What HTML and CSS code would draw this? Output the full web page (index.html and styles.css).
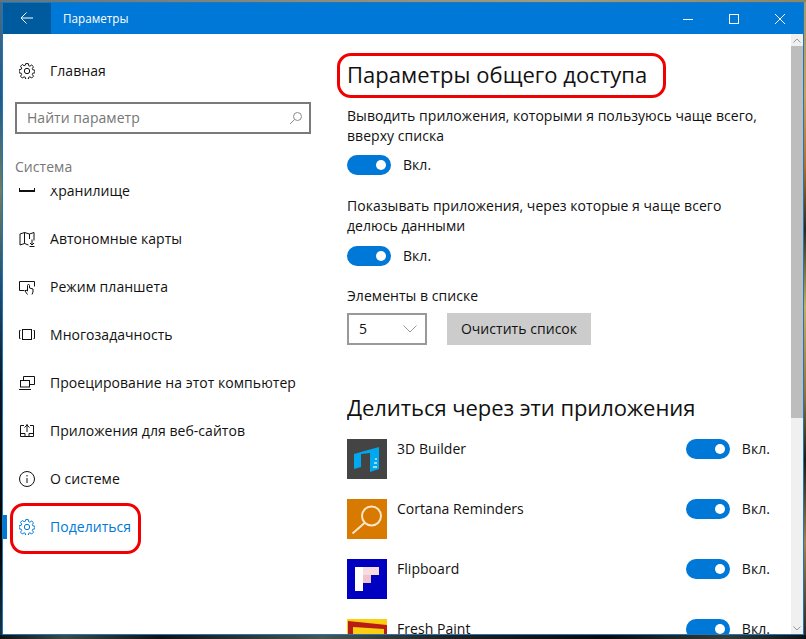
FILE: index.html
```html
<!DOCTYPE html>
<html lang="ru">
<head>
<meta charset="utf-8">
<title>Параметры</title>
<link rel="stylesheet" href="styles.css">
</head>
<body>
<div class="desktop">
  <div class="window">
    <header class="titlebar">
      <div class="back">
        <svg width="14" height="14" viewBox="0 0 14 14"><path d="M1 7h12M6.500 1.500L1 7l5.500 5.500" class="line-white"/></svg>
      </div>
      <div class="app-title">Параметры</div>
      <div class="caption">
        <svg width="12" height="12" viewBox="0 0 12 12"><path d="M1 6.500h10" class="line-white"/></svg>
      </div>
      <div class="caption">
        <svg width="12" height="12" viewBox="0 0 12 12"><rect x="1.500" y="1.500" width="9" height="9" class="line-white"/></svg>
      </div>
      <div class="caption">
        <svg width="12" height="12" viewBox="0 0 12 12"><path d="M1 1l10 10M11 1L1 11" class="line-white"/></svg>
      </div>
    </header>
    <div class="body">
      <aside class="sidebar">
        <div class="nav-item home">
          <svg class="ico" viewBox="0 0 16 16"><use href="#gear"/></svg>
          <span>Главная</span>
        </div>
        <div class="search">
          <span class="placeholder">Найти параметр</span>
          <svg width="14" height="14" viewBox="0 0 14 14"><circle cx="8.500" cy="5.500" r="4" class="line-grey"/><path d="M5.500 8.500L1 13" class="line-grey"/></svg>
        </div>
        <div class="section">Система</div>
        <div class="nav-list">
          <div class="nav-item first">
            <svg class="ico" viewBox="0 0 16 16"><path d="M0 8h16" class="line thick"/><rect x="0.500" y="0.500" width="15" height="7.500" class="line"/></svg>
            <span>Хранилище</span>
          </div>
          <div class="nav-item">
            <svg class="ico" viewBox="0 0 16 16"><path d="M5.500 1.500L1 3v11l4.500-1.500 4 1.500M5.500 1.500l5 1.500 4.500-1.500v8M5.500 1.500v11M10.500 3v5M13 8.500v5.500M11 12l2 2 2-2M10.500 15.500h5" class="line"/></svg>
            <span>Автономные карты</span>
          </div>
          <div class="nav-item">
            <svg class="ico" viewBox="0 0 16 16"><path d="M5.500 11.500H0.500v-9h15v5M8.500 15.500l-2.500-3.500 1-1 1.500 1V6.500a1 1 0 0 1 2 0V9l3.500 1v3l-1 2.500" class="line"/></svg>
            <span>Режим планшета</span>
          </div>
          <div class="nav-item">
            <svg class="ico" viewBox="0 0 16 16"><rect x="3.500" y="2.500" width="9" height="10" class="line"/><path d="M1.500 3.500H0.500v8h1M14.500 3.500h1v8h-1" class="line"/></svg>
            <span>Многозадачность</span>
          </div>
          <div class="nav-item">
            <svg class="ico" viewBox="0 0 16 16"><path d="M4.500 5.500v-4h11v8H10" class="line"/><rect x="1.500" y="5.500" width="9" height="6.500" class="line"/><path d="M0 14.500h12" class="line"/></svg>
            <span>Проецирование на этот компьютер</span>
          </div>
          <div class="nav-item">
            <svg class="ico" viewBox="0 0 16 16"><path d="M5 2.500H1.500v11h13v-11H11M8 1v8M5.500 4.500L8 2l2.500 2.500M1.500 10.500H6v3M10 13.500v-3h4.500" class="line"/></svg>
            <span>Приложения для веб-сайтов</span>
          </div>
          <div class="nav-item">
            <svg class="ico" viewBox="0 0 16 16"><circle cx="8" cy="8" r="7.500" class="line"/><path d="M8 7v5M8 4v1.500" class="line"/></svg>
            <span>О системе</span>
          </div>
          <div class="nav-item active">
            <svg class="ico" viewBox="0 0 16 16"><use href="#gear"/></svg>
            <span>Поделиться</span>
          </div>
        </div>
      </aside>
      <main class="content">
        <h1 class="h1">Параметры общего доступа</h1>
        <p class="para first-para">Выводить приложения, которыми я пользуюсь чаще всего, вверху списка</p>
        <div class="toggle-row mt9"><span class="toggle"></span><span>Вкл.</span></div>
        <p class="para second-para">Показывать приложения, через которые я чаще всего делюсь данными</p>
        <div class="toggle-row mt10"><span class="toggle"></span><span>Вкл.</span></div>
        <div class="label">Элементы в списке</div>
        <div class="controls">
          <div class="select"><span>5</span>
            <svg width="14" height="8" viewBox="0 0 14 8"><path d="M0.500 0.500L7 7l6.500-6.500" class="line-mid"/></svg>
          </div>
          <div class="button">Очистить список</div>
        </div>
        <h2 class="h2">Делиться через эти приложения</h2>
        <div class="apps">
          <div class="app">
            <svg class="app-icon" viewBox="0 0 40 40"><rect width="40" height="40" fill="#444444"/><path d="M7 15l7-2v15l-7 2z" fill="#00a8f0"/><path d="M14 13L32 8v22l-9 3V14l-9 1z" fill="#00a8f0"/><path d="M28 19h2v2h-2zM27 23h3v2h-3zM26 27h4v2h-4z" fill="#9adcf8"/></svg>
            <span class="app-name">3D Builder</span>
            <div class="toggle-row"><span class="toggle"></span><span>Вкл.</span></div>
          </div>
          <div class="app">
            <svg class="app-icon" viewBox="0 0 40 40"><rect width="40" height="40" fill="#d87900"/><circle cx="24.500" cy="17" r="9.500" fill="none" stroke="#fde6c8" stroke-width="2"/><path d="M17.500 24L5.500 34.500" stroke="#fde6c8" stroke-width="2" fill="none"/></svg>
            <span class="app-name">Cortana Reminders</span>
            <div class="toggle-row"><span class="toggle"></span><span>Вкл.</span></div>
          </div>
          <div class="app">
            <svg class="app-icon" viewBox="0 0 40 40"><rect width="40" height="40" fill="#0000c0"/><path d="M8 8h8v24H8z" fill="#ffffff"/><path d="M16 8h16v8H16z" fill="#f7dde0"/><path d="M16 16h8v8h-8z" fill="#f0c4cc"/></svg>
            <span class="app-name">Flipboard</span>
            <div class="toggle-row"><span class="toggle"></span><span>Вкл.</span></div>
          </div>
          <div class="app">
            <svg class="app-icon" viewBox="0 0 40 40"><rect width="40" height="40" fill="#fccf10"/><path d="M1 2l39 4v34h-3V10L6 8v32H1z" fill="#b81c14"/></svg>
            <span class="app-name">Fresh Paint</span>
            <div class="toggle-row"><span class="toggle"></span><span>Вкл.</span></div>
          </div>
        </div>
      </main>
      <div class="scrollbar">
        <div class="arrow">
          <svg width="8" height="5" viewBox="0 0 8 5"><path d="M0.500 4.500L4 1l3.500 3.500" class="line-mid"/></svg>
        </div>
        <div class="thumb"></div>
        <div class="track"></div>
        <div class="arrow">
          <svg width="8" height="5" viewBox="0 0 8 5"><path d="M0.500 0.500L4 4l3.500-3.500" class="line-mid"/></svg>
        </div>
      </div>
    </div>
    <div class="mark mark-title"></div>
    <div class="mark mark-nav"></div>
  </div>
</div>
<svg class="defs" width="0" height="0">
  <defs>
    <symbol id="gear" viewBox="0 0 16 16">
      <path d="M6.700 0.600h2.600l0.400 2.100 1.200 0.500 1.800-1.200 1.800 1.800-1.200 1.800 0.500 1.200 2.100 0.400v2.600l-2.100 0.400-0.500 1.200 1.200 1.800-1.800 1.800-1.800-1.200-1.200 0.500-0.400 2.100H6.700l-0.400-2.100-1.200-0.500-1.800 1.200-1.800-1.800 1.200-1.800-0.500-1.200-2.100-0.400V6.700l2.100-0.400 0.500-1.200-1.200-1.800 1.800-1.800 1.800 1.200 1.200-0.500z" fill="none" stroke="currentColor" stroke-width="1"/>
      <circle cx="8" cy="8" r="2.700" fill="none" stroke="currentColor" stroke-width="1"/>
    </symbol>
  </defs>
</svg>
</body>
</html>
```

FILE: styles.css
```css
* { box-sizing: border-box; }
html, body { margin: 0; padding: 0; }
body {
  width: 806px;
  height: 639px;
  overflow: hidden;
  font-family: "Open Sans", "Noto Sans", sans-serif;
  font-size: 14px;
  line-height: 20px;
  letter-spacing: 0.04px;
  color: #111111;
}
.desktop {
  width: 806px;
  height: 639px;
  padding: 2px 2px 4px 2px;
  background-color: #111;
  background-image:
    linear-gradient(90deg, #111 0, #3d4a44 8%, #111 20%, #4a5650 40%, #222 55%, #0a0a0a 75%, #333b38 90%, #111 100%),
    linear-gradient(90deg, #5e7686 0, #8c8c7c 40%, #a09a80 70%, #8a8468 100%),
    linear-gradient(180deg, #4d6c82 0, #1d5a8c 15%, #6e7e60 30%, #1b4f78 45%, #0a1a2a 60%, #020406 85%, #14384f 100%),
    linear-gradient(180deg, #a09a70 0, #c8a060 15%, #b06f30 26%, #2a2a20 36%, #c4b060 48%, #8c7040 62%, #1a1a14 72%, #a08050 85%, #222 100%);
  background-repeat: no-repeat;
  background-size: 806px 4px, 806px 2px, 2px 639px, 2px 639px;
  background-position: 0 635px, 0 0, 0 0, 804px 0;
}
.window {
  position: relative;
  width: 802px;
  height: 633px;
  border: 1px solid #1f76b8;
  background: #fff;
  display: flex;
  flex-direction: column;
}
.titlebar {
  height: 31px;
  flex: none;
  display: flex;
  align-items: center;
  background: #0078d7;
  color: #fff;
}
.back {
  width: 48px;
  height: 31px;
  padding-bottom: 2px;
  background: #005a9e;
  display: flex;
  align-items: center;
  justify-content: center;
}
.app-title {
  flex: 1;
  padding: 0 0 2px 12px;
  font-size: 11.7px;
  letter-spacing: 0;
}
.caption {
  width: 46px;
  height: 31px;
  display: flex;
  align-items: center;
  justify-content: center;
}
.line-white { fill: none; stroke: #fff; stroke-width: 1; }
.line { fill: none; stroke: #111; stroke-width: 1; }
.thick { stroke-width: 2; }
.line-grey { fill: none; stroke: #8a8a8a; stroke-width: 1; }
.line-mid { fill: none; stroke: #999; stroke-width: 1; }
.body { flex: 1; min-height: 0; display: flex; }
.sidebar {
  width: 344px;
  flex: none;
  display: flex;
  flex-direction: column;
  min-height: 0;
}
.nav-item {
  height: 48px;
  flex: none;
  display: flex;
  align-items: center;
  gap: 15px;
  padding-left: 16px;
  position: relative;
}
.nav-item .ico { width: 16px; height: 16px; flex: none; color: #111; }
.home { margin-top: 13px; }
.search {
  margin: 7px 0 0 12px;
  width: 296px;
  height: 32px;
  border: 2px solid #7a7a7a;
  display: flex;
  align-items: center;
  justify-content: space-between;
  padding: 0 6px 0 10px;
  color: #767676;
}
.placeholder { font-size: 14px; }
.section {
  margin: 23px 0 0 12px;
  height: 20px;
  color: #767676;
}
.nav-list {
  margin-top: 11px;
  flex: 1;
  min-height: 0;
  overflow: hidden;
}
.nav-item.first { margin-top: -21px; }
.nav-item.active { color: #0078d7; }
.nav-item.active .ico { color: #0078d7; }
.nav-item.active::before {
  content: "";
  position: absolute;
  left: 0;
  top: 12px;
  width: 4px;
  height: 24px;
  background: #0078d7;
}
.content {
  flex: 1;
  min-width: 0;
  overflow: hidden;
}
.h1, .h2 {
  margin: 0;
  font-weight: 400;
  font-size: 22px;
  line-height: 32px;
}
.h1 { margin-top: 24px; }
.h2 { margin-top: 46px; letter-spacing: -0.06px; }
.para { margin: 0; max-width: 420px; }
.first-para { margin-top: 16px; }
.second-para { margin-top: 21px; }
.toggle-row {
  display: flex;
  align-items: center;
  gap: 12px;
  height: 20px;
}
.mt9 { margin-top: 9px; }
.mt10 { margin-top: 10px; }
.toggle {
  position: relative;
  width: 44px;
  height: 20px;
  border-radius: 10px;
  background: #0078d7;
  flex: none;
}
.toggle::after {
  content: "";
  position: absolute;
  right: 5px;
  top: 5px;
  width: 10px;
  height: 10px;
  border-radius: 50%;
  background: #fff;
}
.label { margin-top: 20px; }
.controls {
  margin-top: 7px;
  display: flex;
  gap: 20px;
}
.select {
  width: 80px;
  height: 32px;
  border: 2px solid #999;
  display: flex;
  align-items: center;
  justify-content: space-between;
  padding: 0 8px 0 10px;
}
.button {
  width: 144px;
  height: 32px;
  background: #ccc;
  display: flex;
  align-items: center;
  justify-content: center;
}
.apps {
  margin-top: 16px;
  display: flex;
  flex-direction: column;
  gap: 20px;
}
.app {
  display: flex;
  height: 40px;
  flex: none;
  padding-right: 21px;
}
.app-icon { width: 40px; height: 40px; flex: none; }
.app-name { flex: 1; padding-left: 10px; }
.scrollbar {
  width: 12px;
  flex: none;
  background: #f0f0f0;
  display: flex;
  flex-direction: column;
}
.arrow {
  height: 12px;
  flex: none;
  display: flex;
  align-items: center;
  justify-content: center;
}
.thumb { height: 372px; flex: none; background: #bdbdbd; }
.track { flex: 1; }
.defs { position: absolute; }
.mark {
  position: absolute;
  border: 3px solid #f00000;
  border-radius: 14px;
  pointer-events: none;
}
.mark-title { left: 334px; top: 50px; width: 329px; height: 45px; }
.mark-nav { left: 7px; top: 500px; width: 131px; height: 51px; }
```
